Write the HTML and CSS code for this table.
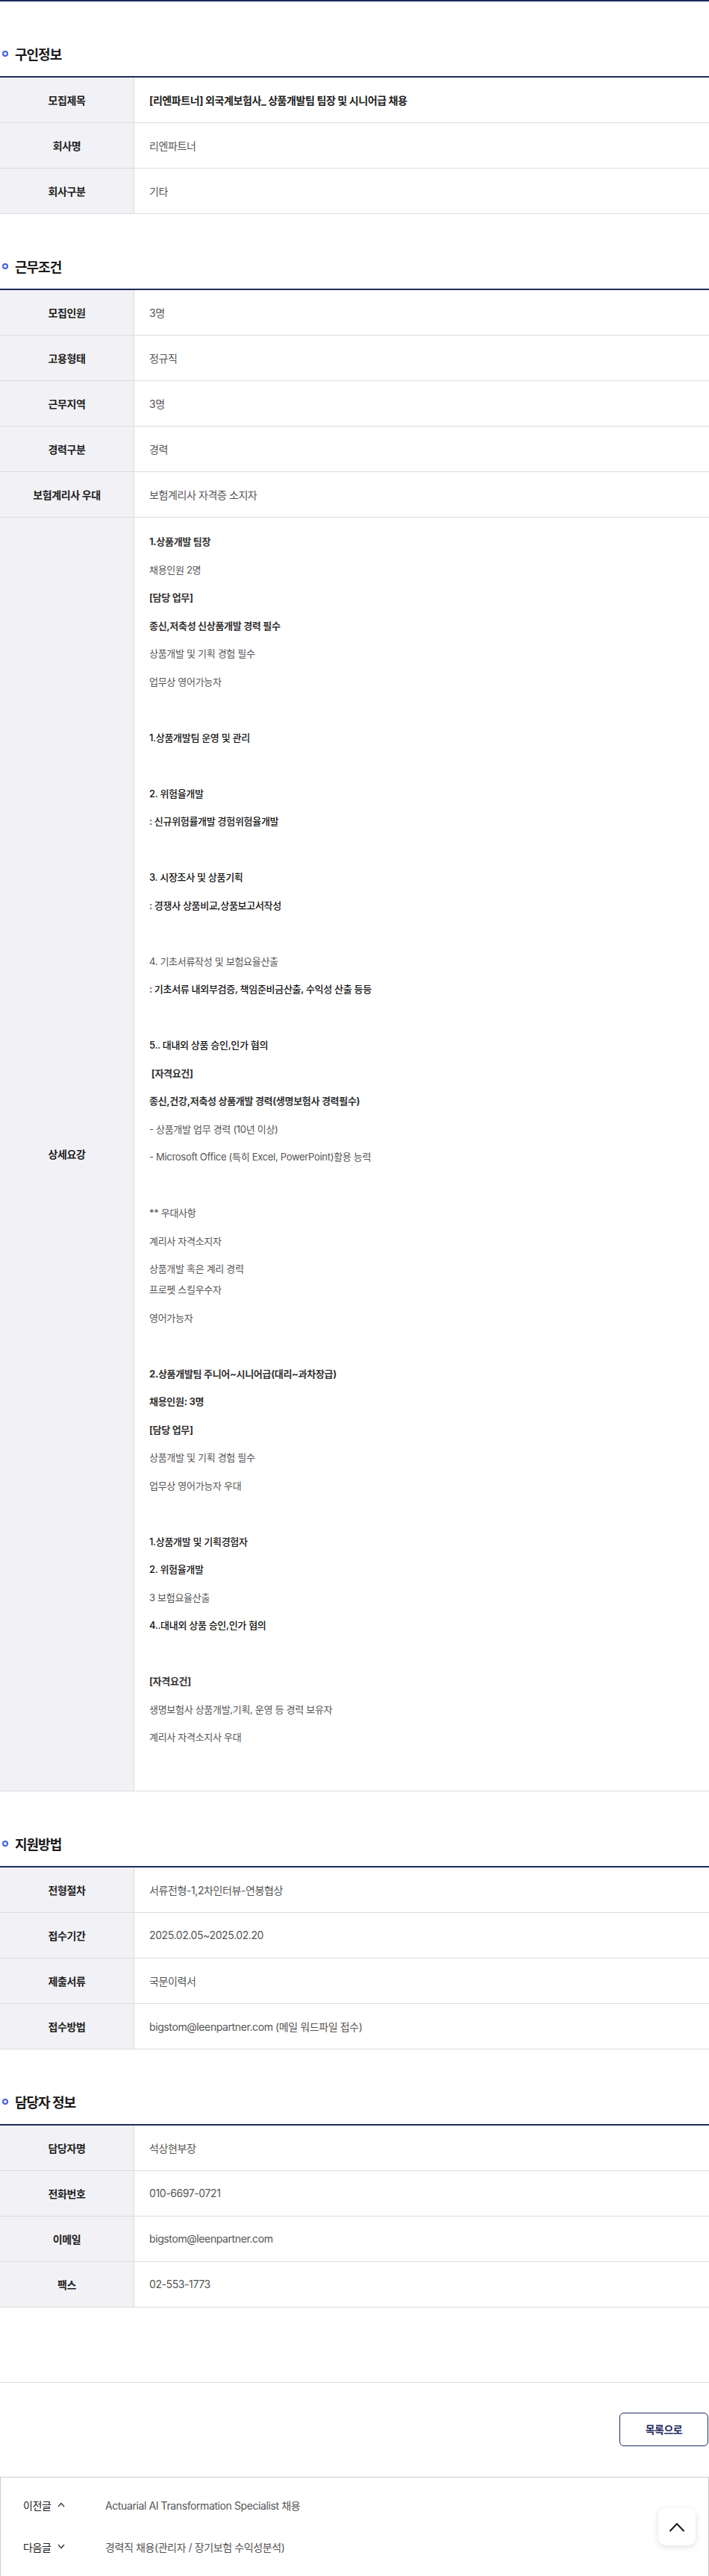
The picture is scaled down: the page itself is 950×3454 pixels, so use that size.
FILE: index.html
```html
<!DOCTYPE html>
<html lang="ko">
<head>
<meta charset="utf-8">
<title>채용정보 상세</title>
<link rel="stylesheet" href="styles.css">
</head>
<body>
<div class="page">
  <div class="topline"></div>

  <section class="section">
    <h2 class="sec-title"><span class="dot"></span>구인정보</h2>
    <div class="table">
      <div class="row"><div class="th">모집제목</div><div class="td strong">[리엔파트너] 외국계보험사_ 상품개발팀 팀장 및 시니어급 채용</div></div>
      <div class="row"><div class="th">회사명</div><div class="td">리엔파트너</div></div>
      <div class="row"><div class="th">회사구분</div><div class="td">기타</div></div>
    </div>
  </section>

  <section class="section">
    <h2 class="sec-title"><span class="dot"></span>근무조건</h2>
    <div class="table">
      <div class="row"><div class="th">모집인원</div><div class="td">3명</div></div>
      <div class="row"><div class="th">고용형태</div><div class="td">정규직</div></div>
      <div class="row"><div class="th">근무지역</div><div class="td">3명</div></div>
      <div class="row"><div class="th">경력구분</div><div class="td">경력</div></div>
      <div class="row"><div class="th">보험계리사 우대</div><div class="td">보험계리사 자격증 소지자</div></div>
      <div class="row">
        <div class="th">상세요강</div>
        <div class="td detail">
          <p class="b">1.상품개발 팀장</p>
          <p>채용인원 2명</p>
          <p class="b">[담당 업무]</p>
          <p class="b">종신,저축성 신상품개발 경력 필수</p>
          <p>상품개발 및 기획 경험 필수</p>
          <p>업무상 영어가능자</p>
          <p>&nbsp;</p>
          <p class="m">1.상품개발팀 운영 및 관리</p>
          <p>&nbsp;</p>
          <p class="m">2. 위험율개발</p>
          <p class="m">: 신규위험률개발 경험위험율개발</p>
          <p>&nbsp;</p>
          <p class="m">3. 시장조사 및 상품기획</p>
          <p class="m">: 경쟁사 상품비교,상품보고서작성</p>
          <p>&nbsp;</p>
          <p>4. 기초서류작성 및 보험요율산출</p>
          <p class="m">: 기초서류 내외부검증, 책임준비금산출, 수익성 산출 등등</p>
          <p>&nbsp;</p>
          <p class="m">5.. 대내외 상품 승인,인가 협의</p>
          <p class="b">&nbsp;[자격요건]</p>
          <p class="b">종신,건강,저축성 상품개발 경력(생명보험사 경력필수)</p>
          <p>- 상품개발 업무 경력 (10년 이상)</p>
          <p>- Microsoft Office (특히 Excel, PowerPoint)활용 능력</p>
          <p>&nbsp;</p>
          <p>** 우대사항</p>
          <p>계리사 자격소지자</p>
          <p>상품개발 혹은 계리 경력<br>프로펫 스킬우수자</p>
          <p>영어가능자</p>
          <p>&nbsp;</p>
          <p class="b">2.상품개발팀 주니어~시니어급(대리~과차장급)</p>
          <p class="b">채용인원: 3명</p>
          <p class="b">[담당 업무]</p>
          <p>상품개발 및 기획 경험 필수</p>
          <p>업무상 영어가능자 우대</p>
          <p>&nbsp;</p>
          <p class="m">1.상품개발 및 기획경험자</p>
          <p class="m">2. 위험율개발</p>
          <p>3 보험요율산출</p>
          <p class="m">4..대내외 상품 승인,인가 협의</p>
          <p>&nbsp;</p>
          <p class="b">[자격요건]</p>
          <p>생명보험사 상품개발,기획, 운영 등 경력 보유자</p>
          <p>계리사 자격소지사 우대</p>
          <p>&nbsp;</p>
        </div>
      </div>
    </div>
  </section>

  <section class="section">
    <h2 class="sec-title"><span class="dot"></span>지원방법</h2>
    <div class="table">
      <div class="row"><div class="th">전형절차</div><div class="td">서류전형-1,2차인터뷰-연봉협상</div></div>
      <div class="row"><div class="th">접수기간</div><div class="td">2025.02.05~2025.02.20</div></div>
      <div class="row"><div class="th">제출서류</div><div class="td">국문이력서</div></div>
      <div class="row"><div class="th">접수방법</div><div class="td">bigstom@leenpartner.com (메일 워드파일 접수)</div></div>
    </div>
  </section>

  <section class="section">
    <h2 class="sec-title"><span class="dot"></span>담당자 정보</h2>
    <div class="table">
      <div class="row"><div class="th">담당자명</div><div class="td">석상현부장</div></div>
      <div class="row"><div class="th">전화번호</div><div class="td">010-6697-0721</div></div>
      <div class="row"><div class="th">이메일</div><div class="td">bigstom@leenpartner.com</div></div>
      <div class="row"><div class="th">팩스</div><div class="td">02-553-1773</div></div>
    </div>
  </section>

  <div class="divider"></div>

  <div class="actions">
    <a class="btn-list" href="#">목록으로</a>
  </div>

  <div class="nav-box">
    <div class="nav-row">
      <span class="nav-label">이전글
        <svg class="chev" width="10" height="7" viewBox="0 0 10 7"><polyline points="1,6 5,1.5 9,6" fill="none" stroke="#333" stroke-width="1.3"/></svg>
      </span>
      <a class="nav-title" href="#">Actuarial AI Transformation Specialist 채용</a>
    </div>
    <div class="nav-row">
      <span class="nav-label">다음글
        <svg class="chev" width="10" height="7" viewBox="0 0 10 7"><polyline points="1,1 5,5.5 9,1" fill="none" stroke="#333" stroke-width="1.3"/></svg>
      </span>
      <a class="nav-title" href="#">경력직 채용(관리자 / 장기보험 수익성분석)</a>
    </div>
  </div>

  <a class="to-top" href="#">
    <svg width="22" height="13" viewBox="0 0 22 13"><polyline points="1.5,12 11,2 20.5,12" fill="none" stroke="#222" stroke-width="2.2"/></svg>
  </a>
</div>
</body>
</html>
```

FILE: styles.css
```css
* { box-sizing: border-box; }

html, body {
  margin: 0;
  padding: 0;
  background: #fff;
}

body {
  font-family: Inter, "Noto Sans CJK KR", sans-serif;
  color: #222;
}

.page {
  width: 950px;
}

.topline {
  height: 2px;
  background: #1c2a5c;
}

.section {
  padding-top: 55px;
}

.sec-title {
  display: flex;
  align-items: center;
  gap: 9px;
  margin: 0 0 15px;
  height: 30px;
  font-size: 18px;
  font-weight: 700;
  letter-spacing: -1px;
  color: #1a1a1a;
}

.dot {
  width: 8px;
  height: 8px;
  margin-left: 3px;
  border: 2px solid #3d5fe0;
  border-radius: 50%;
}

.table {
  border-top: 2px solid #1c2a5c;
}

.row {
  display: grid;
  grid-template-columns: 180px 1fr;
  border-bottom: 1px solid #dcdcdc;
}

.th {
  display: flex;
  align-items: center;
  justify-content: center;
  min-height: 60px;
  background: #f2f2f6;
  border-right: 1px solid #dcdcdc;
  font-size: 14px;
  font-weight: 700;
  letter-spacing: -0.4px;
  color: #222;
}

.td {
  display: flex;
  align-items: center;
  min-height: 60px;
  padding: 0 20px;
  font-size: 14px;
  letter-spacing: -0.4px;
  color: #555;
}

.td.strong {
  font-weight: 700;
  color: #222;
}

.td.detail {
  display: block;
  padding: 18px 20px 20px;
  font-size: 13px;
  letter-spacing: -0.3px;
  color: #555;
}

.detail p {
  margin: 0 0 9.5px;
  line-height: 28px;
}

.detail p:last-child {
  margin-bottom: 0;
}

.detail p.b {
  font-weight: 700;
  color: #333;
}

.detail p.m {
  font-weight: 500;
  color: #111;
}

.divider {
  margin-top: 100px;
  border-top: 1px solid #dcdcdc;
}

.actions {
  display: flex;
  justify-content: flex-end;
  padding: 40px 1px 41px 0;
}

.btn-list {
  display: flex;
  align-items: center;
  justify-content: center;
  width: 119px;
  height: 45px;
  border: 1px solid #1c2a5c;
  border-radius: 6px;
  font-size: 14px;
  font-weight: 700;
  letter-spacing: -0.5px;
  color: #1c2a5c;
  text-decoration: none;
}

.nav-box {
  display: flex;
  flex-direction: column;
  gap: 28px;
  height: 134px;
  padding: 23px 30px 0;
  border: 1px solid #cccccc;
}

.nav-row {
  display: flex;
  align-items: center;
  height: 28px;
  font-size: 14px;
  letter-spacing: -0.4px;
}

.nav-label {
  display: flex;
  align-items: center;
  gap: 9px;
  width: 110px;
  color: #222;
}

.chev {
  display: block;
}

.nav-title {
  color: #555;
  text-decoration: none;
}

.to-top {
  position: fixed;
  right: 18px;
  bottom: 41px;
  display: flex;
  align-items: center;
  justify-content: center;
  width: 50px;
  height: 50px;
  background: #fff;
  border-radius: 10px;
  box-shadow: 0 2px 8px rgba(0, 0, 0, 0.13);
}
```
